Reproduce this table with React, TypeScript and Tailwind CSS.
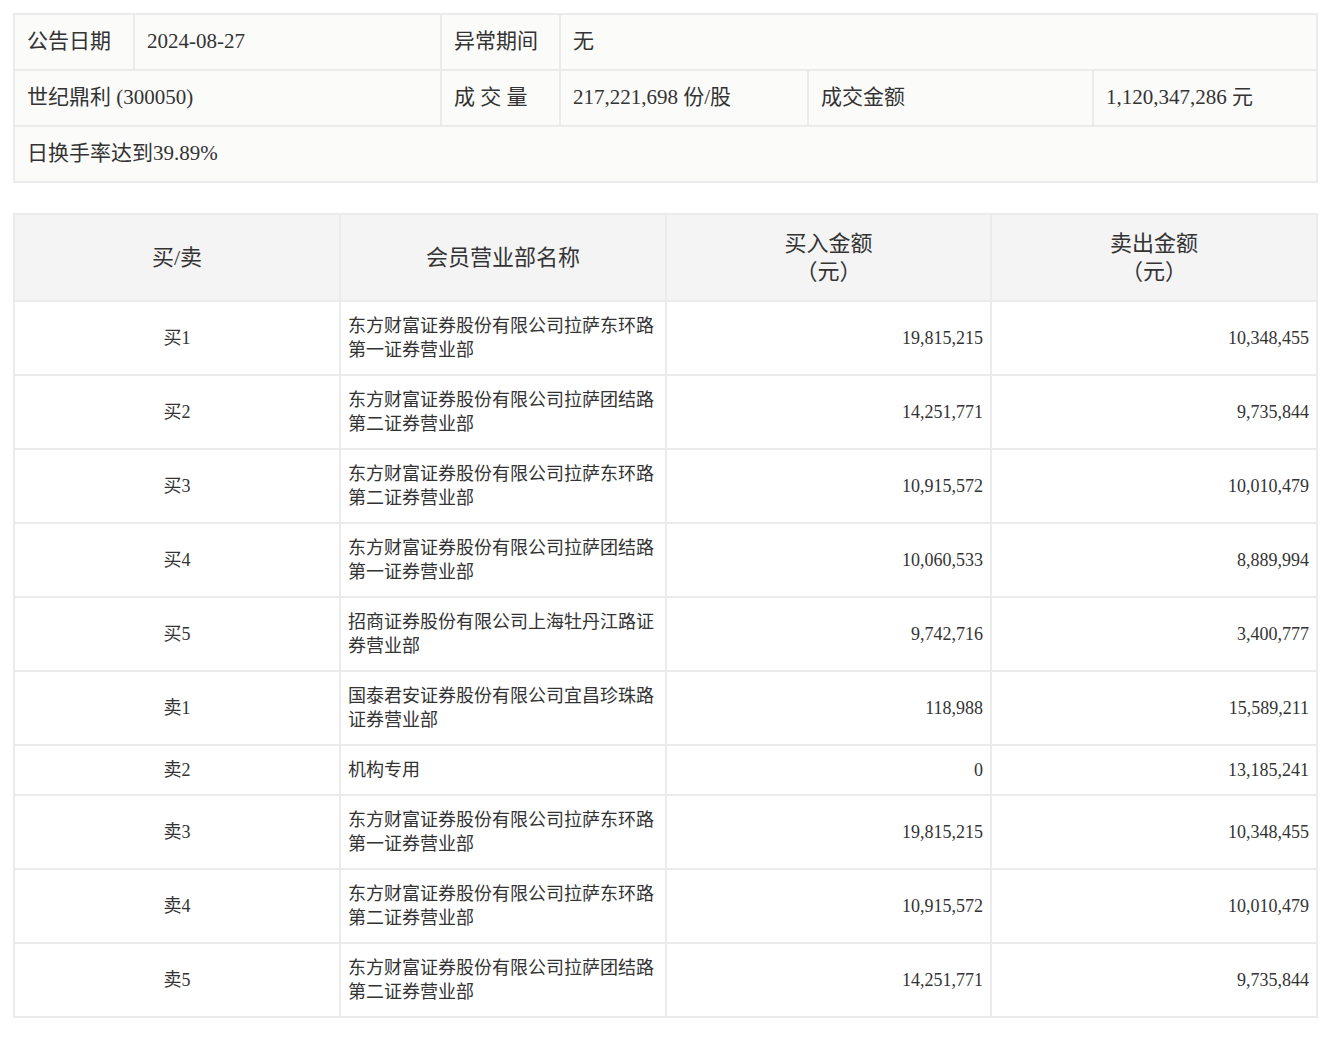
const font = { fontFamily: '"Liberation Serif", "Noto Sans CJK SC", serif' };

const rows = [
  { side: "买1", name: "东方财富证券股份有限公司拉萨东环路第一证券营业部", buy: "19,815,215", sell: "10,348,455" },
  { side: "买2", name: "东方财富证券股份有限公司拉萨团结路第二证券营业部", buy: "14,251,771", sell: "9,735,844" },
  { side: "买3", name: "东方财富证券股份有限公司拉萨东环路第二证券营业部", buy: "10,915,572", sell: "10,010,479" },
  { side: "买4", name: "东方财富证券股份有限公司拉萨团结路第一证券营业部", buy: "10,060,533", sell: "8,889,994" },
  { side: "买5", name: "招商证券股份有限公司上海牡丹江路证券营业部", buy: "9,742,716", sell: "3,400,777" },
  { side: "卖1", name: "国泰君安证券股份有限公司宜昌珍珠路证券营业部", buy: "118,988", sell: "15,589,211" },
  { side: "卖2", name: "机构专用", buy: "0", sell: "13,185,241" },
  { side: "卖3", name: "东方财富证券股份有限公司拉萨东环路第一证券营业部", buy: "19,815,215", sell: "10,348,455" },
  { side: "卖4", name: "东方财富证券股份有限公司拉萨东环路第二证券营业部", buy: "10,915,572", sell: "10,010,479" },
  { side: "卖5", name: "东方财富证券股份有限公司拉萨团结路第二证券营业部", buy: "14,251,771", sell: "9,735,844" },
];

const App = () => {
  const topCell = "border-2 border-[#ebebeb] h-[56px] px-[12px] text-left align-middle font-normal";
  const bodyCell = "border-2 border-[#ebebeb] py-[12px] px-[7px] align-middle";

  return (
    <div className="min-h-screen bg-white text-[#333] pl-[13px] pr-[8px] pt-[13px] pb-[20px]" style={font}>
      {/* Summary table */}
      <table className="w-[1303px] border-collapse bg-[#fbfbfa] text-[21px] table-fixed">
        <colgroup>
          <col className="w-[120px]" />
          <col className="w-[307px]" />
          <col className="w-[119px]" />
          <col className="w-[248px]" />
          <col className="w-[285px]" />
          <col className="w-[224px]" />
        </colgroup>
        <tbody>
          <tr>
            <td className={topCell}>公告日期</td>
            <td className={topCell}>2024-08-27</td>
            <td className={topCell}>异常期间</td>
            <td className={topCell} colSpan={3}>无</td>
          </tr>
          <tr>
            <td className={topCell} colSpan={2}>世纪鼎利 (300050)</td>
            <td className={topCell}>成 交 量</td>
            <td className={topCell}>217,221,698 份/股</td>
            <td className={topCell}>成交金额</td>
            <td className={topCell}>1,120,347,286 元</td>
          </tr>
          <tr>
            <td className={topCell} colSpan={6}>日换手率达到39.89%</td>
          </tr>
        </tbody>
      </table>

      {/* Trading seats table */}
      <table className="w-[1303px] mt-[30px] border-collapse table-fixed text-[18px] leading-6">
        <colgroup>
          <col className="w-[326px]" />
          <col className="w-[326px]" />
          <col className="w-[325px]" />
          <col className="w-[326px]" />
        </colgroup>
        <thead>
          <tr className="bg-[#f4f4f4] text-[22px] leading-[28px]">
            <th className="border-2 border-[#ebebeb] h-[87px] font-normal text-center align-middle">买/卖</th>
            <th className="border-2 border-[#ebebeb] h-[87px] font-normal text-center align-middle">会员营业部名称</th>
            <th className="border-2 border-[#ebebeb] h-[87px] font-normal text-center align-middle">
              买入金额<br />（元）
            </th>
            <th className="border-2 border-[#ebebeb] h-[87px] font-normal text-center align-middle">
              卖出金额<br />（元）
            </th>
          </tr>
        </thead>
        <tbody className="bg-white">
          {rows.map((r, i) => (
            <tr key={i}>
              <td className={bodyCell + " text-center"}>{r.side}</td>
              <td className={bodyCell + " text-left"}>{r.name}</td>
              <td className={bodyCell + " text-right"}>{r.buy}</td>
              <td className={bodyCell + " text-right"}>{r.sell}</td>
            </tr>
          ))}
        </tbody>
      </table>
    </div>
  );
};

export default App;
